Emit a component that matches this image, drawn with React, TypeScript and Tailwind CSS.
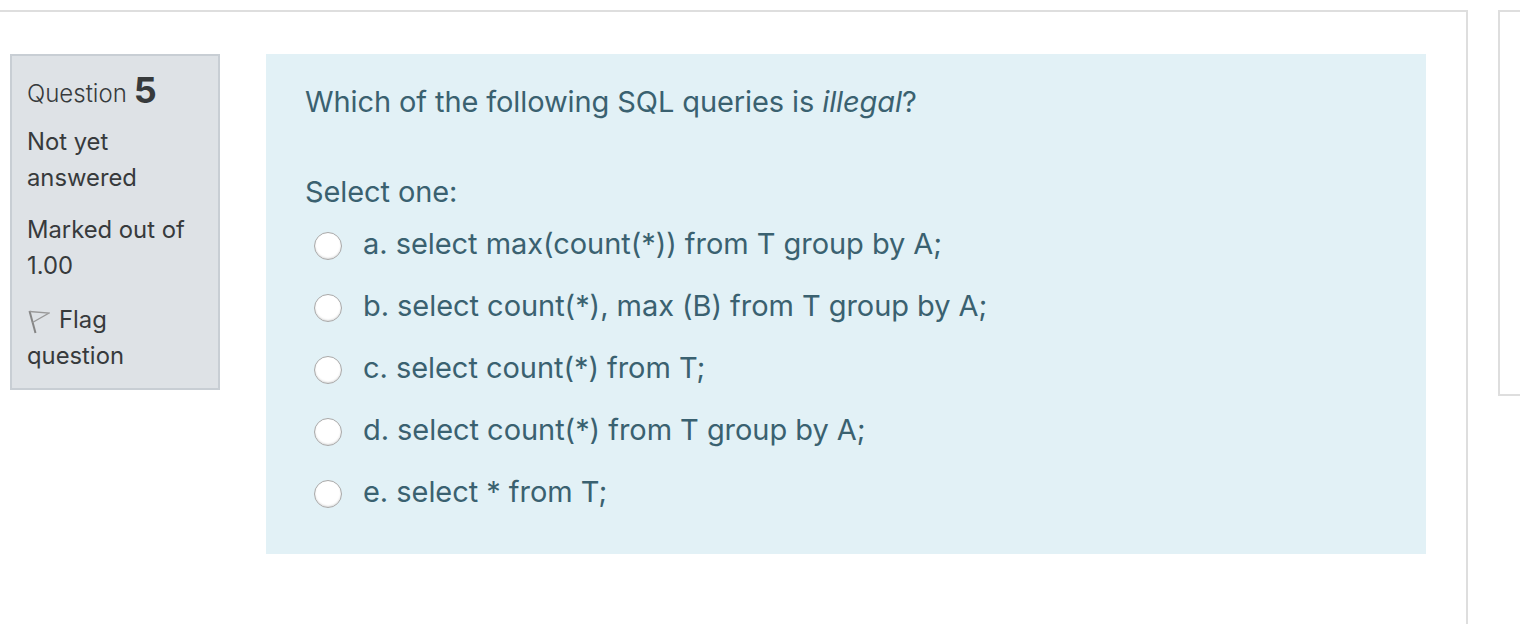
export default function App() {
  const options = [
    "a. select max(count(*)) from T group by A;",
    "b. select count(*), max (B) from T group by A;",
    "c. select count(*) from T;",
    "d. select count(*) from T group by A;",
    "e. select * from T;",
  ];
  return (
    <div className="flex h-[624px] w-[1520px] overflow-hidden bg-white pt-[10px] font-['Inter',sans-serif]">
      <div className="flex h-[640px] w-[1468px] shrink-0 items-start gap-[46px] border-t-2 border-r-2 border-[#dedede] pt-[42px] pr-[40px] pl-[10px]">
        <div className="flex h-[336px] w-[210px] shrink-0 flex-col border-2 border-[#c8ced4] bg-[#dee2e6] pl-[15px] text-[23.8px] leading-[36px] text-[#373a3c]">
          <div className="mt-[19px] flex h-[38px] items-center">
            <span className="text-[24px] font-light text-[#373a3c]">Question</span>
            <span className="ml-[7px] -translate-y-[4px] text-[36px] leading-[36px] font-bold">5</span>
          </div>
          <div className="mt-[11px]">Not yet<br />answered</div>
          <div className="mt-[16px]">Marked out of<br />1.00</div>
          <div className="mt-[18px]">
            <div className="flex items-center">
              <svg width="23" height="26" viewBox="0 0 23 26" className="mt-[4px] mr-[9px]">
                <path d="M2.5 2 L8.5 24" stroke="#858585" strokeWidth="2" fill="none" />
                <path d="M2.5 2.5 L22 4 L5.5 13.5" stroke="#999999" strokeWidth="1.3" fill="none" />
              </svg>
              Flag
            </div>
            question
          </div>
        </div>
        <div className="flex h-[500px] w-[1160px] shrink-0 flex-col bg-[#e2f1f6] pl-[39px] text-[29px] tracking-[-0.1px] text-[#3a6170]">
          <p className="mt-[24px] h-[48px] leading-[48px]">
            Which of the following SQL queries is <em>illegal</em>?
          </p>
          <p className="mt-[42px] h-[48px] leading-[48px]">Select one:</p>
          <div className="mt-[-3px] flex flex-col tracking-[-0.05px]">
            {options.map((o) => (
              <label key={o} className="flex h-[62px] items-center">
                <span className="mt-[4px] mr-[21px] ml-[9px] size-[28px] shrink-0 rounded-full border border-[#a9a9a9] bg-white shadow-[inset_0_-1px_2px_rgba(0,0,0,0.15)]" />
                {o}
              </label>
            ))}
          </div>
        </div>
      </div>
      <div className="ml-[30px] h-[386px] flex-1 border-y-2 border-l-2 border-[#dedede]" />
    </div>
  );
}
